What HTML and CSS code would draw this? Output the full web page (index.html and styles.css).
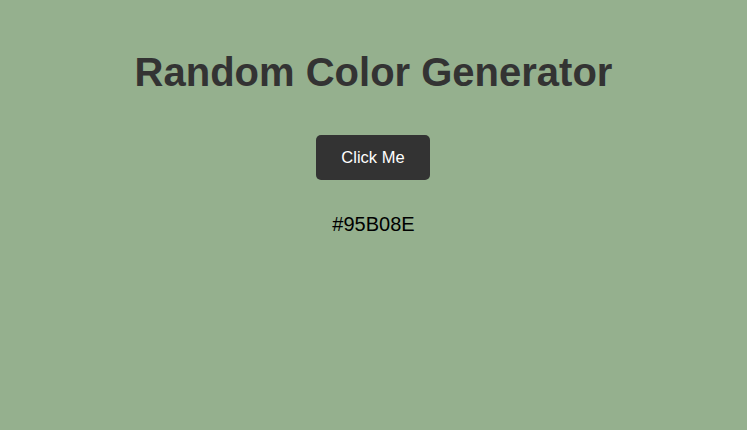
FILE: index.html
```html
<!DOCTYPE html>
<html lang="en">
<head>
<meta charset="utf-8">
<title>Random Color Generator</title>
<link rel="stylesheet" href="styles.css">
</head>
<body>
<main class="app">
  <h1 class="title">Random Color Generator</h1>
  <button class="btn" type="button">Click Me</button>
  <p class="hex">#95B08E</p>
</main>
</body>
</html>
```

FILE: styles.css
```css
html, body {
  margin: 0;
  padding: 0;
}
body {
  background: #95b08e;
  font-family: "Liberation Sans", Arial, sans-serif;
  min-height: 430px;
}
.app {
  display: flex;
  flex-direction: column;
  align-items: center;
  padding-top: 49px;
}
.title {
  margin: 0;
  font-size: 40px;
  font-weight: bold;
  color: #333333;
  line-height: 46px;
}
.btn {
  margin-top: 40px;
  margin-right: 1px;
  height: 45px;
  width: 114px;
  padding: 0;
  border: none;
  border-radius: 5px;
  background: #333333;
  color: #ffffff;
  font-family: "Liberation Sans", Arial, sans-serif;
  font-size: 16.5px;
  cursor: pointer;
}
.hex {
  margin: 33px 0 0;
  font-size: 20px;
  line-height: 23px;
  color: #000000;
}
```
